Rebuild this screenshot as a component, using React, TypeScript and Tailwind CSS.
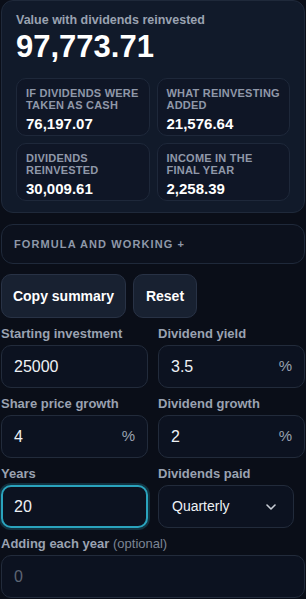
import React from "react";

function Stat({ label, value }: { label: string; value: string }) {
  return (
    <div className="rounded-[10px] border border-[#1e283a] bg-[#0f1626] px-[9px] pt-[8px] pb-[8px] h-[58px]">
      <div className="text-[11px] leading-[12px] font-bold uppercase tracking-[0.02em] text-[#8f98a9]">{label}</div>
      <div className="mt-[4px] text-[15px] leading-[18px] font-bold text-white">{value}</div>
    </div>
  );
}

function Field({ label, value, suffix, focus, muted }: { label: React.ReactNode; value: string; suffix?: string; focus?: boolean; muted?: boolean }) {
  return (
    <div className="flex flex-col">
      <div className="h-[16px] text-[13px] leading-[16px] font-bold text-[#9aa2b1]">{label}</div>
      <div
        className={
          "mt-[3px] h-[43px] rounded-[10px] flex items-center justify-between " +
          (focus
            ? "border-2 border-[#2aa3bd] bg-[#0c1220] shadow-[0_0_0_2px_rgba(42,163,189,0.25)] px-[11px]"
            : "border border-[#222b3b] bg-[#0c1220] px-[12px]")
        }
      >
        <span className={"text-[16px] " + (muted ? "text-[#5d6574]" : "text-[#eef1f5]")}>{value}</span>
        {suffix && <span className="text-[15px] text-[#9aa2b1]">{suffix}</span>}
      </div>
    </div>
  );
}

export default function App() {
  return (
    <div className="w-[306px] h-[599px] overflow-hidden bg-[#0a0e18] text-white" style={{ fontFamily: '"Liberation Sans", Arial, sans-serif' }}>
      <div className="mx-[1px] rounded-[12px] border border-[#1f293a] bg-[#111a2a] px-[14px] pt-[10px] pb-[11px]">
        <div className="text-[12.5px] leading-[18px] font-bold text-[#9aa2b1]">Value with dividends reinvested</div>
        <div className="text-[31px] leading-[34px] font-bold text-white mt-[1px]">97,773.71</div>
        <div className="grid grid-cols-2 gap-[7px] mt-[14px]">
          <Stat label="If dividends were taken as cash" value="76,197.07" />
          <Stat label="What reinvesting added" value="21,576.64" />
          <Stat label="Dividends reinvested" value="30,009.61" />
          <Stat label="Income in the final year" value="2,258.39" />
        </div>
      </div>
      <div className="mx-[1px] mt-[11px] h-[40px] rounded-[12px] border border-[#1f293a] bg-[#0c111d] flex items-center px-[12px]">
        <span className="text-[11px] font-bold uppercase tracking-[0.1em] text-[#8f98a9]">Formula and working +</span>
      </div>
      <div className="flex gap-[7px] mt-[10px] ml-[1px]">
        <button className="h-[44px] w-[125px] rounded-[10px] border border-[#283245] bg-[#182131] text-[14px] font-bold text-white">Copy summary</button>
        <button className="h-[44px] w-[64px] rounded-[10px] border border-[#283245] bg-[#182131] text-[14px] font-bold text-white">Reset</button>
      </div>
      <div className="grid grid-cols-2 gap-x-[10px] gap-y-[8px] mt-[8px] pl-[1px] pr-[1px]">
        <Field label="Starting investment" value="25000" />
        <Field label="Dividend yield" value="3.5" suffix="%" />
        <Field label="Share price growth" value="4" suffix="%" />
        <Field label="Dividend growth" value="2" suffix="%" />
        <Field label="Years" value="20" focus />
        <div className="flex flex-col">
          <div className="h-[16px] text-[13px] leading-[16px] font-bold text-[#9aa2b1]">Dividends paid</div>
          <div className="mt-[3px] h-[43px] rounded-[10px] border border-[#222b3b] bg-[#0c1220] flex items-center justify-between pl-[13px] pr-[16px] mr-[11px]">
            <span className="text-[14px] text-[#eef1f5]">Quarterly</span>
            <svg width="12" height="8" viewBox="0 0 12 8" fill="none">
              <path d="M2 2l4 4 4-4" stroke="#c9ced6" strokeWidth="1.6" strokeLinecap="round" strokeLinejoin="round" />
            </svg>
          </div>
        </div>
        <div className="col-span-2">
          <Field label={<>Adding each year <span className="font-normal text-[#7c8594]">(optional)</span></>} value="0" muted />
        </div>
      </div>
    </div>
  );
}
